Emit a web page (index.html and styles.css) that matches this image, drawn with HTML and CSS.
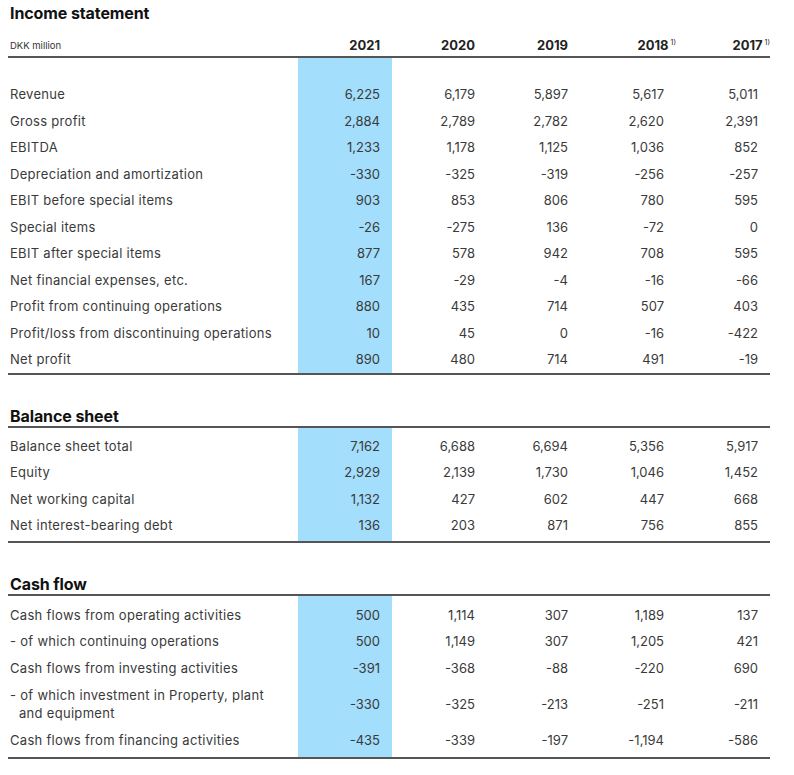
FILE: index.html
```html
<!DOCTYPE html>
<html lang="en">
<head>
<meta charset="utf-8">
<title>Income statement</title>
<link rel="stylesheet" href="styles.css">
</head>
<body>
<div class="page">
  <h1 class="title">Income statement</h1>
  <div class="row head">
    <div class="label unit">DKK million</div>
    <div class="num">2021</div>
    <div class="num">2020</div>
    <div class="num n3">2019</div>
    <div class="num">2018<sup>1)</sup></div>
    <div class="num">2017<sup>1)</sup></div>
  </div>
  <div class="body first">
    <div class="row"><div class="label">Revenue</div><div class="num">6,225</div><div class="num">6,179</div><div class="num n3">5,897</div><div class="num">5,617</div><div class="num">5,011</div></div>
    <div class="row"><div class="label">Gross profit</div><div class="num">2,884</div><div class="num">2,789</div><div class="num n3">2,782</div><div class="num">2,620</div><div class="num">2,391</div></div>
    <div class="row"><div class="label">EBITDA</div><div class="num">1,233</div><div class="num">1,178</div><div class="num n3">1,125</div><div class="num">1,036</div><div class="num">852</div></div>
    <div class="row"><div class="label">Depreciation and amortization</div><div class="num">-330</div><div class="num">-325</div><div class="num n3">-319</div><div class="num">-256</div><div class="num">-257</div></div>
    <div class="row"><div class="label">EBIT before special items</div><div class="num">903</div><div class="num">853</div><div class="num n3">806</div><div class="num">780</div><div class="num">595</div></div>
    <div class="row"><div class="label">Special items</div><div class="num">-26</div><div class="num">-275</div><div class="num n3">136</div><div class="num">-72</div><div class="num">0</div></div>
    <div class="row"><div class="label">EBIT after special items</div><div class="num">877</div><div class="num">578</div><div class="num n3">942</div><div class="num">708</div><div class="num">595</div></div>
    <div class="row"><div class="label">Net financial expenses, etc.</div><div class="num">167</div><div class="num">-29</div><div class="num n3">-4</div><div class="num">-16</div><div class="num">-66</div></div>
    <div class="row"><div class="label">Profit from continuing operations</div><div class="num">880</div><div class="num">435</div><div class="num n3">714</div><div class="num">507</div><div class="num">403</div></div>
    <div class="row"><div class="label">Profit/loss from discontinuing operations</div><div class="num">10</div><div class="num">45</div><div class="num n3">0</div><div class="num">-16</div><div class="num">-422</div></div>
    <div class="row"><div class="label">Net profit</div><div class="num">890</div><div class="num">480</div><div class="num n3">714</div><div class="num">491</div><div class="num">-19</div></div>
  </div>

  <h2 class="section-title">Balance sheet</h2>
  <div class="body mid">
    <div class="row"><div class="label">Balance sheet total</div><div class="num">7,162</div><div class="num">6,688</div><div class="num n3">6,694</div><div class="num">5,356</div><div class="num">5,917</div></div>
    <div class="row"><div class="label">Equity</div><div class="num">2,929</div><div class="num">2,139</div><div class="num n3">1,730</div><div class="num">1,046</div><div class="num">1,452</div></div>
    <div class="row"><div class="label">Net working capital</div><div class="num">1,132</div><div class="num">427</div><div class="num n3">602</div><div class="num">447</div><div class="num">668</div></div>
    <div class="row"><div class="label">Net interest-bearing debt</div><div class="num">136</div><div class="num">203</div><div class="num n3">871</div><div class="num">756</div><div class="num">855</div></div>
  </div>

  <h2 class="section-title">Cash flow</h2>
  <div class="body last">
    <div class="row"><div class="label">Cash flows from operating activities</div><div class="num">500</div><div class="num">1,114</div><div class="num n3">307</div><div class="num">1,189</div><div class="num">137</div></div>
    <div class="row"><div class="label">- of which continuing operations</div><div class="num">500</div><div class="num">1,149</div><div class="num n3">307</div><div class="num">1,205</div><div class="num">421</div></div>
    <div class="row"><div class="label">Cash flows from investing activities</div><div class="num">-391</div><div class="num">-368</div><div class="num n3">-88</div><div class="num">-220</div><div class="num">690</div></div>
    <div class="row tall"><div class="label">- of which investment in Property, plant<br><span class="indent">and equipment</span></div><div class="num">-330</div><div class="num">-325</div><div class="num n3">-213</div><div class="num">-251</div><div class="num">-211</div></div>
    <div class="row"><div class="label">Cash flows from financing activities</div><div class="num">-435</div><div class="num">-339</div><div class="num n3">-197</div><div class="num">-1,194</div><div class="num">-586</div></div>
  </div>
</div>
</body>
</html>
```
FILE: styles.css
```css
* { box-sizing: border-box; }
html, body { margin: 0; padding: 0; background: #fff; }
body {
  font-family: Inter, "Liberation Sans", sans-serif;
  color: #3a3a3a;
}
.page {
  width: 762px;
  margin-left: 8px;
}
.title {
  margin: 0;
  padding: 3px 0 0 2px;
  height: 26px;
  font-size: 16px;
  line-height: 20px;
  font-weight: 700;
  color: #111;
  letter-spacing: -0.1px;
}
.row {
  display: grid;
  grid-template-columns: 290px 94px 95px 96px 93px 94px;
  align-items: center;
  height: 26.5px;
  font-size: 13px;
  line-height: 16px;
}
.label {
  padding-left: 2px;
  white-space: nowrap;
  letter-spacing: 0.3px;
}
.num {
  text-align: right;
  padding-right: 12px;
}
.num.n3 { padding-right: 15px; }
.head {
  height: 32px;
  align-items: end;
  padding-bottom: 3px;
  border-bottom: 2px solid #555;
}
.head .num {
  font-weight: 700;
  color: #222;
}
.head sup {
  font-size: 7px;
  font-weight: 400;
  vertical-align: 5px;
  line-height: 0;
  margin-left: 2px;
  margin-right: -12px;
}
.head .unit {
  font-size: 9.5px;
  line-height: 12px;
  letter-spacing: 0;
  color: #333;
  align-self: end;
  padding-bottom: 1px;
}
.body {
  background: linear-gradient(to right, transparent 290px, #a3defc 290px, #a3defc 384px, transparent 384px);
  border-bottom: 2px solid #555;
  padding-top: 5px;
}
.body.first { padding-top: 23px; padding-bottom: 0; }
.body.mid { padding-bottom: 2px; }
.body.last { padding-top: 6px; padding-bottom: 3px; }
.section-title {
  margin: 31px 0 0 0;
  padding-left: 2px;
  font-size: 16px;
  line-height: 20px;
  font-weight: 700;
  color: #111;
  border-bottom: 2px solid #555;
  letter-spacing: -0.1px;
}
.row.tall {
  height: 46px;
  line-height: 18.4px;
}
.indent { padding-left: 9px; }
```
